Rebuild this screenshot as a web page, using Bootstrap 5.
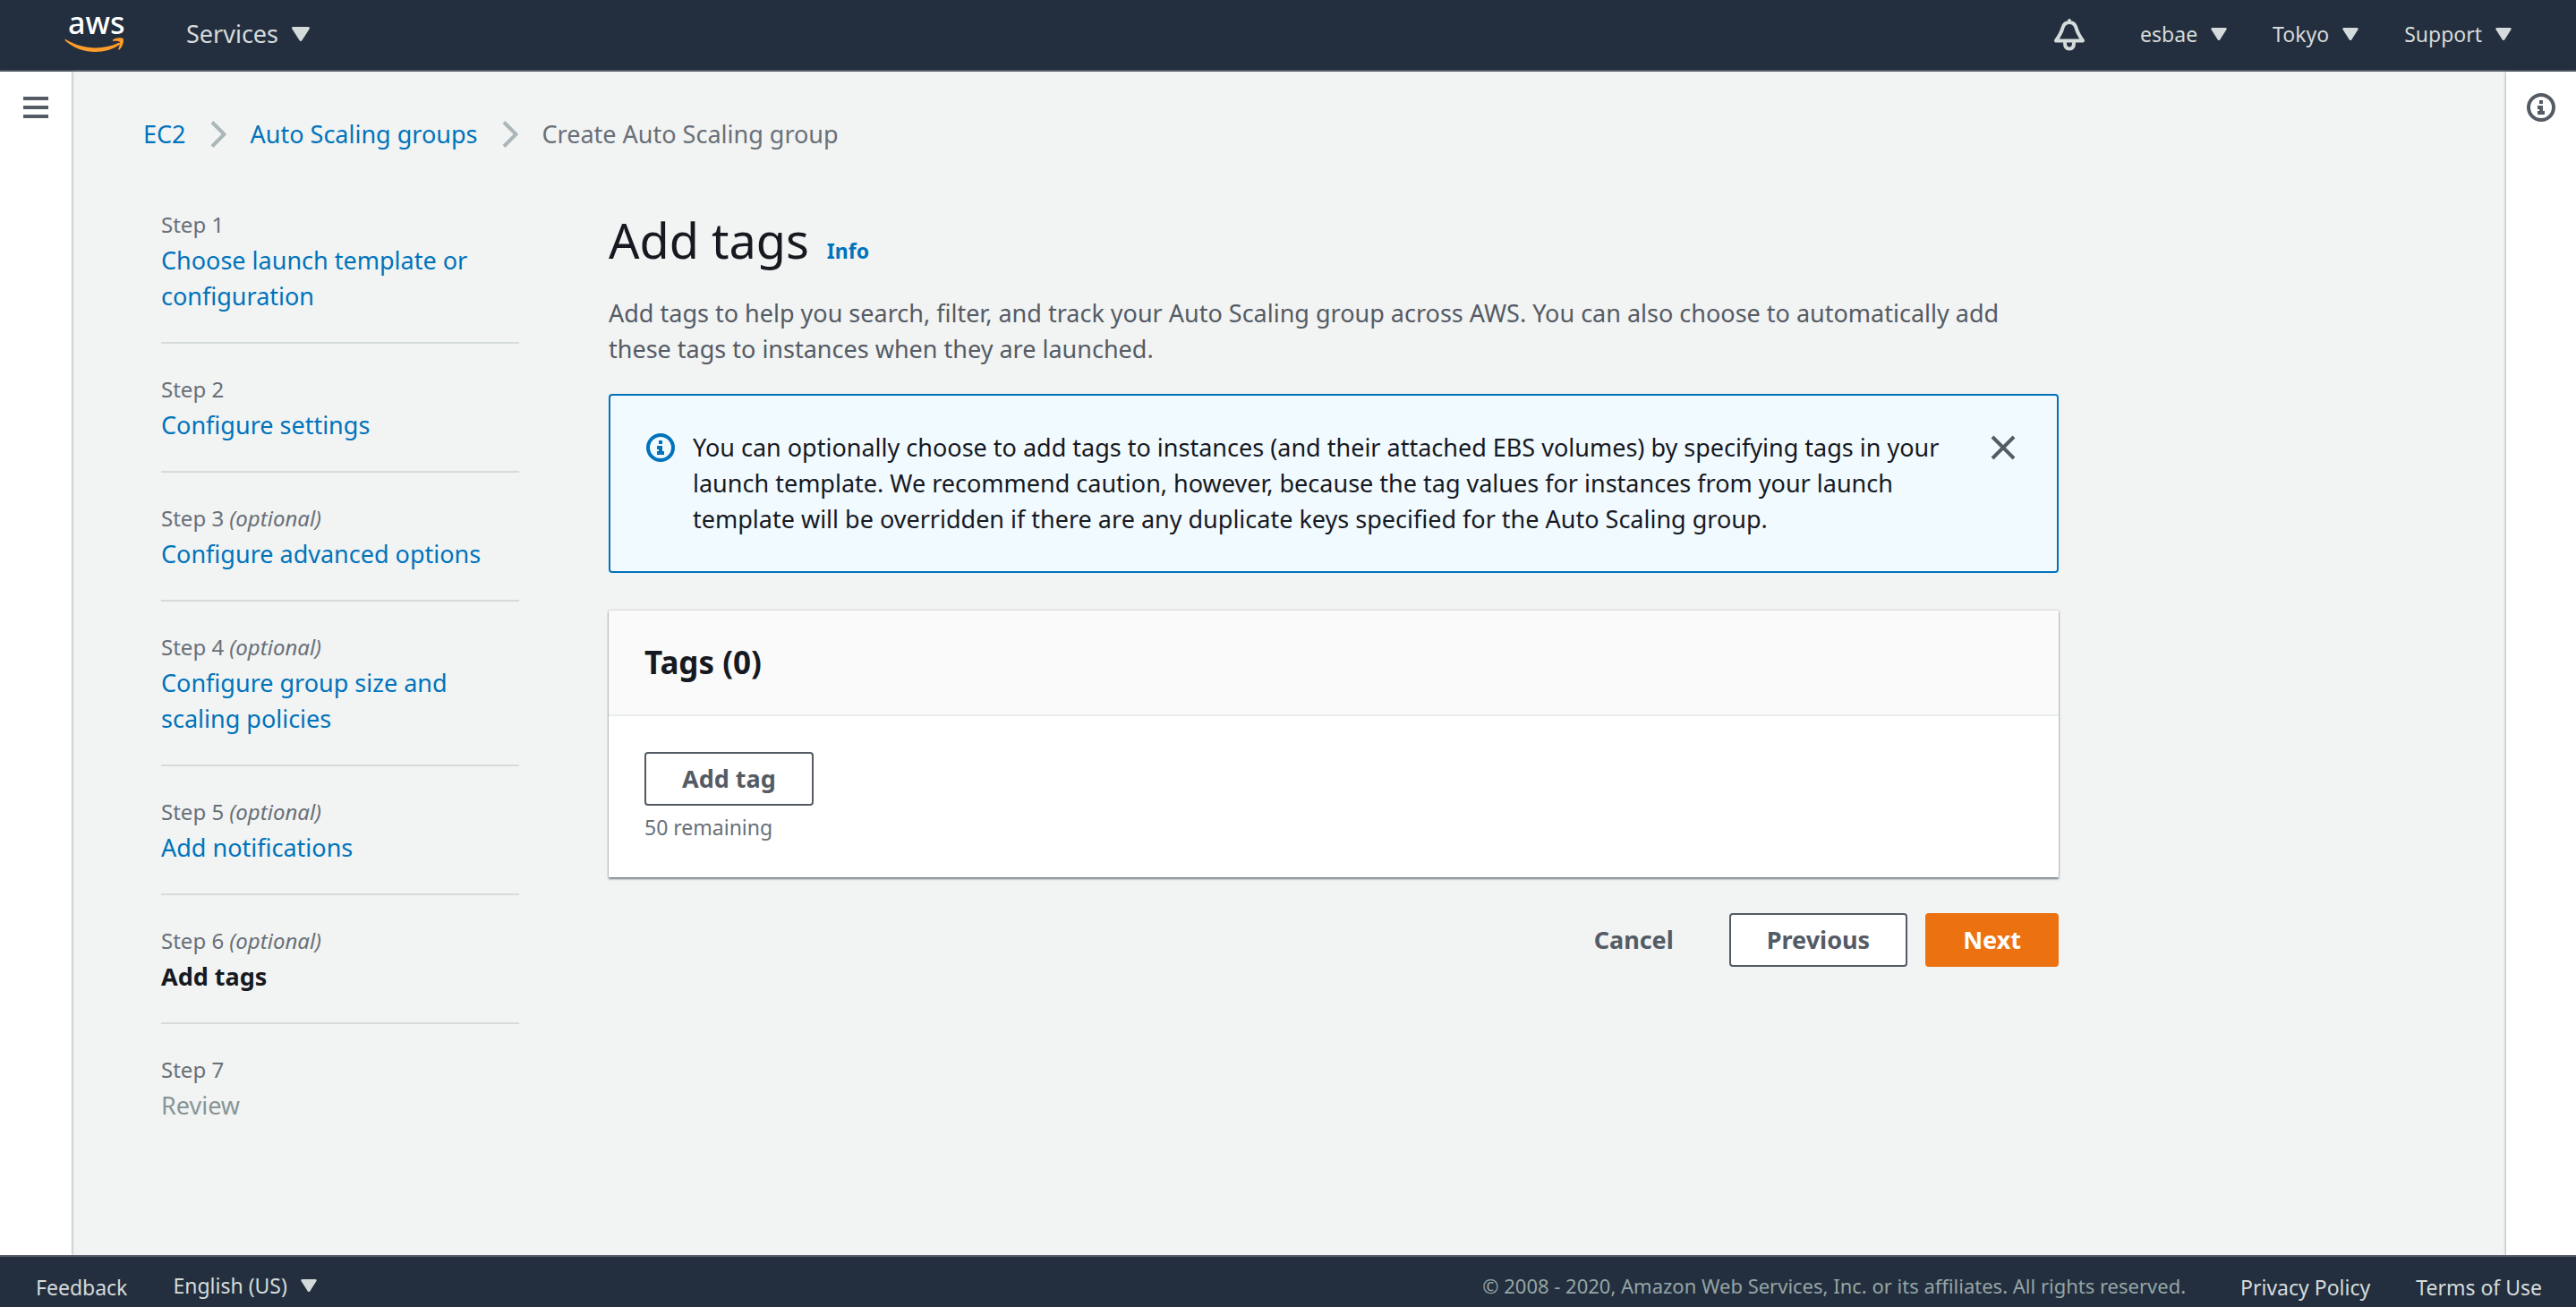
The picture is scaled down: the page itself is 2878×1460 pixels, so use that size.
<!DOCTYPE html>
<html lang="en">
<head>
<meta charset="utf-8">
<meta name="viewport" content="width=device-width, initial-scale=1">
<title>Create Auto Scaling group</title>
<link href="https://cdn.jsdelivr.net/npm/bootstrap@5.3.0/dist/css/bootstrap.min.css" rel="stylesheet">
<style>
  body { font-family: "Noto Sans", "Open Sans", sans-serif; font-size: 27px; line-height: 40px; color: #16191f; background: #f2f3f3; }
  a { color: #0073bb; text-decoration: none; }
  .console-bar { background: #232f3e; color: #d5dbdb; }
  .top-bar { height: 80px; border-bottom: 2px solid #545b64; padding: 0 72px 2px; gap: 66px; }
  .bottom-bar { height: 58px; border-top: 2px solid #545b64; padding: 12px 38px 0 40px; gap: 51px; font-size: 23px; line-height: 40px; }
  .bar-link { color: #d5dbdb; background: none; border: 0; padding: 0; display: flex; align-items: center; gap: 15px; line-height: 40px; font-weight: inherit; }
  .bottom-bar a { line-height: 44px; }
  .account-menu { font-size: 23px; gap: 51px; }
  .bell-link { margin-right: 10px; }
  .legal-note { color: #95a5a6; font-size: 22px; margin-right: 10px; }
  .side-rail { width: 80px; flex: none; background: #fff; box-shadow: 0 0 3px rgba(0,28,36,.5); padding-top: 24px; display: flex; justify-content: center; align-items: flex-start; }
  .help-rail { width: 78px; }
  .rail-btn { background: none; border: 0; padding: 0; height: 32px; display: flex; align-items: center; }
  .rail-btn, .close-btn { color: #545b64; }
  .workspace { padding: 50px 80px 80px; }
  .crumbs { gap: 27px; }
  .crumbs .here { color: #687078; }
  .wizard { padding-top: 61px; gap: 100px; }
  .steps-col { width: 400px; flex: none; margin-left: 20px; }
  .step-item { padding: 31px 0; border-bottom: 2px solid #d5dbdb; }
  .step-item:first-child { padding-top: 0; }
  .step-item:last-child { border-bottom: 0; }
  .step-no { font-size: 24px; color: #687078; }
  .step-off { color: #879596; }
  .form-col { max-width: 1620px; }
  .title-row { gap: 20px; }
  .page-title { font-size: 54px; line-height: 74px; font-weight: 400; margin: 0; }
  .info-link { font-size: 23px; font-weight: 700; }
  .intro { color: #545b64; padding-top: 25px; }
  .notice { background: #f1faff; border: 2px solid #0073bb; border-radius: 4px; margin: 30px 0 42px; padding: 38px 44px 38px 40px; gap: 20px; }
  .notice svg { flex: none; margin-top: 4px; }
  .notice-info { color: #0073bb; }
  .close-btn { background: none; border: 0; padding: 0; line-height: 0; }
  .tag-panel { background: #fff; box-shadow: 0 2px 2px rgba(0,28,36,.5), 0 0 2px rgba(0,28,36,.3); }
  .panel-head { background: #fafafa; border-bottom: 2px solid #eaeded; padding: 36px 40px; }
  .panel-head h2 { font-size: 35px; line-height: 44px; font-weight: 700; margin: 0; }
  .panel-body { padding: 40px 40px 36px; }
  .console-btn { height: 60px; border: 2px solid #545b64; border-radius: 4px; background: #fff; color: #545b64; font-weight: 700; font-size: 27px; line-height: 40px; padding: 0 40px; }
  .btn-plain { background: none; border-color: transparent; }
  .btn-go { background: #ec7211; border-color: #ec7211; color: #fff; }
  .hint { font-size: 23px; color: #687078; padding-top: 4px; }
  .actions { gap: 20px; padding-top: 40px; }
</style>
</head>
<body class="d-flex flex-column min-vh-100">
<svg width="0" height="0" class="position-absolute" aria-hidden="true">
  <symbol id="caret" viewBox="0 0 20 16"><path d="M2 0h16q3 0 1.500 2.500L11.500 15q-1.500 2-3 0L.500 2.500Q-1 0 2 0z" fill="currentColor"/></symbol>
  <symbol id="info" viewBox="0 0 32 32"><circle cx="16" cy="16" r="14" fill="none" stroke="currentColor" stroke-width="4"/><path d="M14 8h4v4h-4zM12 14h6v6h2v4h-8v-4h2v-2h-2z" fill="currentColor"/></symbol>
  <symbol id="chev" viewBox="0 0 18 30"><path d="M2 1.500 15.500 15 2 28.500" fill="none" stroke="#aab7b8" stroke-width="4"/></symbol>
</svg>

<header class="console-bar top-bar d-flex align-items-center">
  <a href="#" aria-label="AWS home" class="d-flex">
    <svg width="70" height="76" viewBox="0 0 70 76">
      <text x="4" y="38" font-size="34" font-weight="500" fill="#fff" font-family="Noto Sans, sans-serif">aws</text>
      <g transform="translate(0 8)" fill="#ff9c2a"><path d="M1.500 36C19 47 42 48.500 60 40c2-1 3 .8 1.500 2C45 53.500 18 53 1 37.500c-.8-1-.4-2 .5-1.500z"/><path d="M54 36.500c3-2.500 9-3 11.500-1.500 1.500 2.500-.5 9.500-4.300 12.500-.8.600-1.300.2-1-.7 1.200-3 2.300-6.500 1.500-8-1-1.300-4.500-1.200-7-1-1 .1-1.200-.8-.7-1.300z"/></g>
    </svg>
  </a>
  <button type="button" class="bar-link">Services <svg width="20" height="16"><use href="#caret"/></svg></button>
  <nav class="account-menu d-flex align-items-center ms-auto" aria-label="Account">
    <a href="#" class="bar-link bell-link" aria-label="Notifications">
      <svg width="36" height="40" viewBox="0 -4 36 40" fill="none" stroke="currentColor" stroke-width="4" stroke-linejoin="round" stroke-linecap="round"><path d="M18 1v2M18 3c-4.500 0-6.500 2.500-7.500 6-1 4-1.500 6-7.500 14.500h30c-6-8.500-6.500-10.500-7.500-14.500-1-3.500-3-6-7.500-6z"/><path d="M13 26c0 4.500 2 6.500 5 6.500s5-2 5-6.500"/></svg></a>
    <button type="button" class="bar-link">esbae <svg width="18" height="14"><use href="#caret"/></svg></button>
    <button type="button" class="bar-link">Tokyo <svg width="18" height="14"><use href="#caret"/></svg></button>
    <button type="button" class="bar-link">Support <svg width="18" height="14"><use href="#caret"/></svg></button>
  </nav>
</header>

<div class="d-flex flex-grow-1">
  <aside class="side-rail">
    <button type="button" class="rail-btn" aria-label="Open navigation"><svg width="28" height="24" fill="currentColor"><path d="M0 0h28v4H0zM0 10h28v4H0zM0 20h28v4H0z"/></svg></button>
  </aside>
  <main class="workspace flex-grow-1">
    <nav class="crumbs d-flex align-items-center" aria-label="Breadcrumb">
      <a href="#">EC2</a>
      <svg width="18" height="30"><use href="#chev"/></svg>
      <a href="#">Auto Scaling groups</a>
      <svg width="18" height="30"><use href="#chev"/></svg>
      <span class="here">Create Auto Scaling group</span>
    </nav>
    <div class="wizard d-flex align-items-start">
      <nav class="steps-col" aria-label="Steps">
        <div class="step-item"><div class="step-no">Step 1</div><a href="#">Choose launch template or configuration</a></div>
        <div class="step-item"><div class="step-no">Step 2</div><a href="#">Configure settings</a></div>
        <div class="step-item"><div class="step-no">Step 3 <em>(optional)</em></div><a href="#">Configure advanced options</a></div>
        <div class="step-item"><div class="step-no">Step 4 <em>(optional)</em></div><a href="#">Configure group size and scaling policies</a></div>
        <div class="step-item"><div class="step-no">Step 5 <em>(optional)</em></div><a href="#">Add notifications</a></div>
        <div class="step-item"><div class="step-no">Step 6 <em>(optional)</em></div><span class="fw-bold">Add tags</span></div>
        <div class="step-item"><div class="step-no">Step 7</div><span class="step-off">Review</span></div>
      </nav>
      <section class="form-col flex-grow-1">
        <div class="title-row d-flex align-items-baseline">
          <h1 class="page-title">Add tags</h1>
          <a href="#" class="info-link">Info</a>
        </div>
        <p class="intro mb-0">Add tags to help you search, filter, and track your Auto Scaling group across AWS. You can also choose to automatically add these tags to instances when they are launched.</p>
        <div class="notice d-flex align-items-start" role="status">
          <svg class="notice-info" width="32" height="32"><use href="#info"/></svg>
          <div class="flex-grow-1">You can optionally choose to add tags to instances (and their attached EBS volumes) by specifying tags in your launch template. We recommend caution, however, because the tag values for instances from your launch template will be overridden if there are any duplicate keys specified for the Auto Scaling group.</div>
          <button type="button" class="close-btn" aria-label="Dismiss"><svg width="32" height="32" fill="none" stroke="currentColor" stroke-width="4"><path d="M4 4l24 24M28 4 4 28"/></svg></button>
        </div>
        <div class="tag-panel">
          <div class="panel-head"><h2>Tags (0)</h2></div>
          <div class="panel-body">
            <button type="button" class="console-btn">Add tag</button>
            <div class="hint">50 remaining</div>
          </div>
        </div>
        <div class="actions d-flex justify-content-end">
          <button type="button" class="console-btn btn-plain">Cancel</button>
          <button type="button" class="console-btn">Previous</button>
          <button type="button" class="console-btn btn-go">Next</button>
        </div>
      </section>
    </div>
  </main>
  <aside class="side-rail help-rail">
    <button type="button" class="rail-btn" aria-label="Open help"><svg width="32" height="32"><use href="#info"/></svg></button>
  </aside>
</div>

<footer class="console-bar bottom-bar d-flex align-items-start">
  <a href="#" class="bar-link">Feedback</a>
  <button type="button" class="bar-link">English (US) <svg width="18" height="14"><use href="#caret"/></svg></button>
  <span class="legal-note ms-auto">© 2008 - 2020, Amazon Web Services, Inc. or its affiliates. All rights reserved.</span>
  <a href="#" class="bar-link">Privacy Policy</a>
  <a href="#" class="bar-link">Terms of Use</a>
</footer>
<script src="https://cdn.jsdelivr.net/npm/bootstrap@5.3.0/dist/js/bootstrap.bundle.min.js"></script>
</body>
</html>
